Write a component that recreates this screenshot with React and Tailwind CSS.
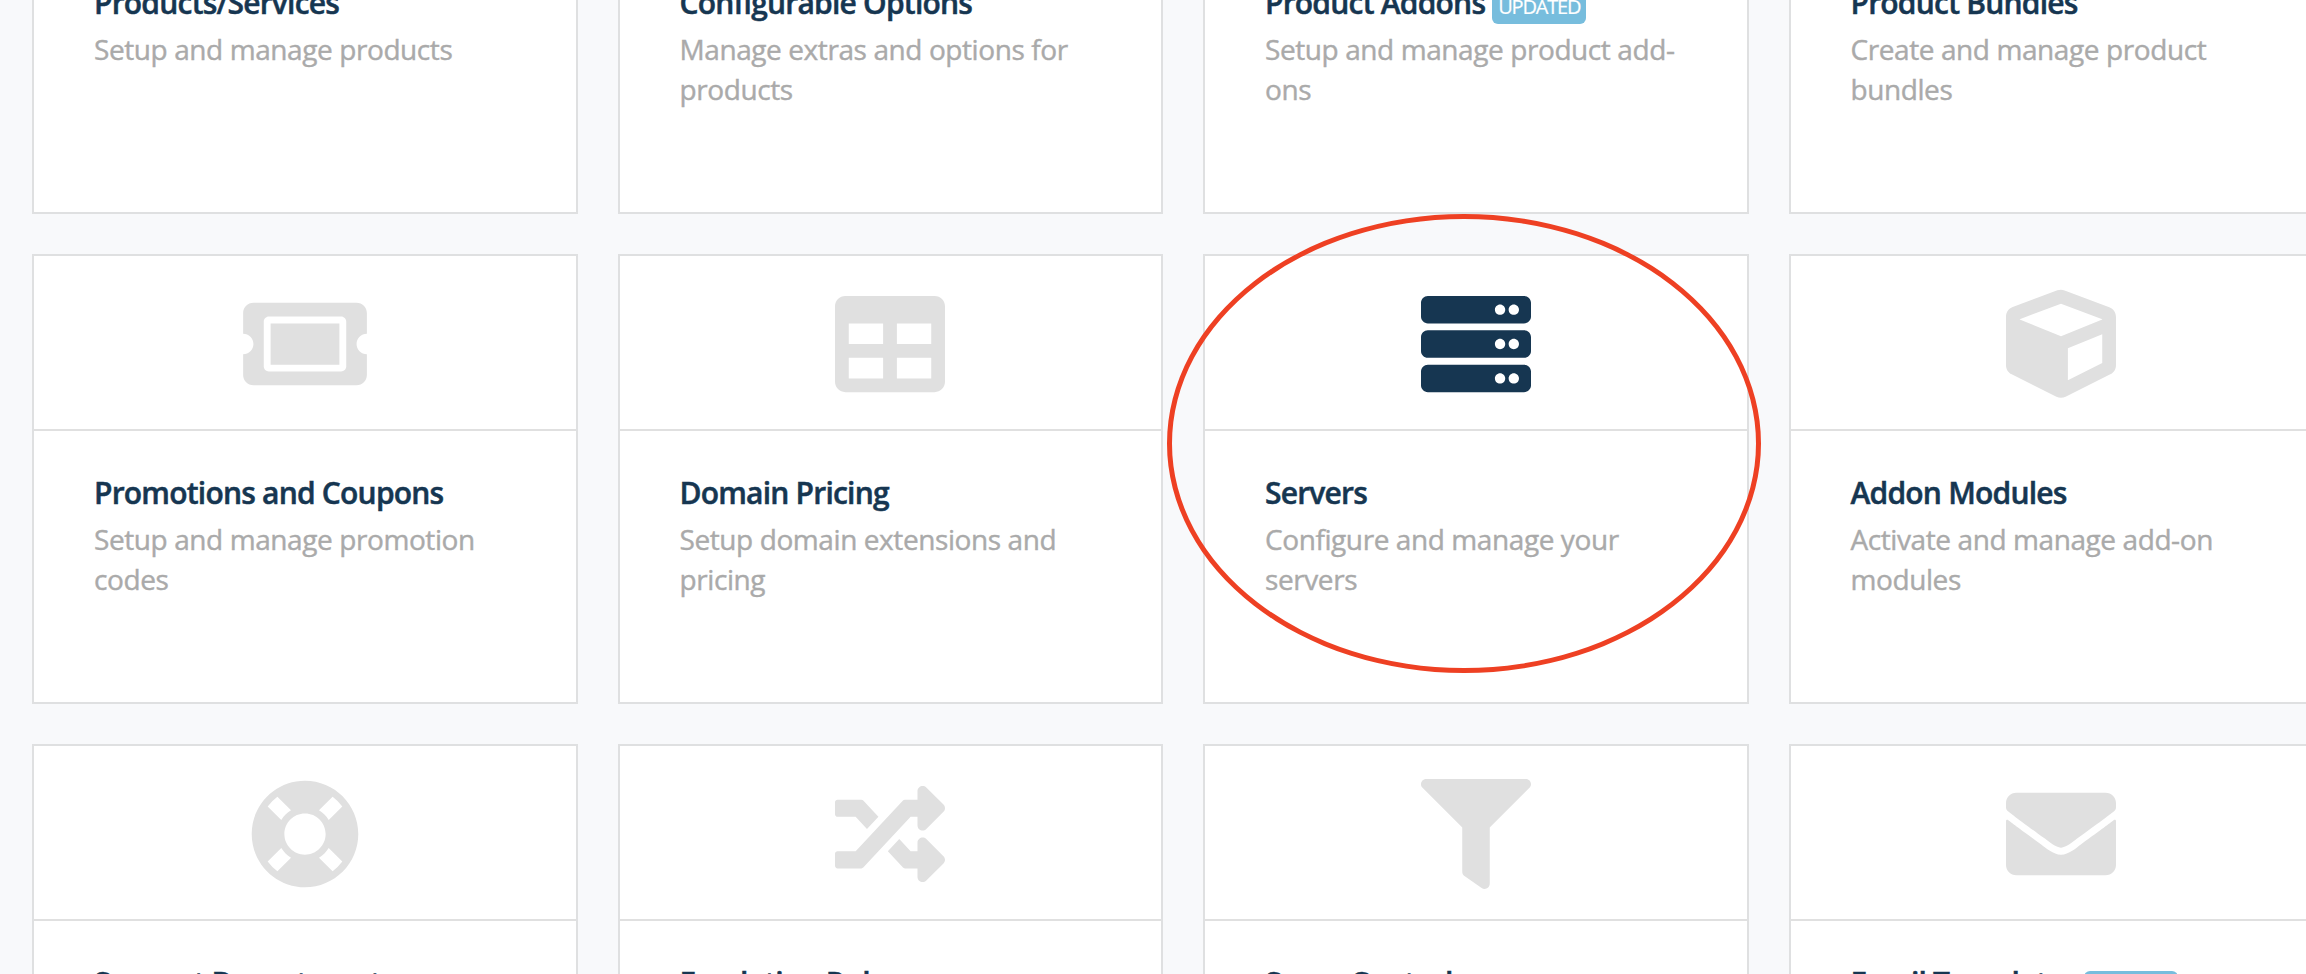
import React from 'react';
import {
  FaCube,
  FaEnvelope,
  FaFilter,
  FaLifeRing,
  FaRandom,
  FaServer,
  FaTable,
  FaTicketAlt,
} from 'react-icons/fa';

const rows = [
  [
    { title: 'Products/Services', text: 'Setup and manage products' },
    { title: 'Configurable Options', text: 'Manage extras and options for products' },
    { title: 'Product Addons', text: 'Setup and manage product add-ons', updated: true },
    { title: 'Product Bundles', text: 'Create and manage product bundles' },
  ],
  [
    { title: 'Promotions and Coupons', text: 'Setup and manage promotion codes', icon: FaTicketAlt, wide: true },
    { title: 'Domain Pricing', text: 'Setup domain extensions and pricing', icon: FaTable },
    { title: 'Servers', text: 'Configure and manage your servers', icon: FaServer, active: true },
    { title: 'Addon Modules', text: 'Activate and manage add-on modules', icon: FaCube },
  ],
  [
    { title: 'Support Departments', icon: FaLifeRing },
    { title: 'Escalation Rules', icon: FaRandom },
    { title: 'Spam Control', icon: FaFilter },
    { title: 'Email Templates', icon: FaEnvelope, updated: true },
  ],
];

function Card({ title, text, icon: Icon, wide, active, updated }) {
  return (
    <article className="h-[450px] border-2 border-[#dfe0e1] bg-white">
      <div
        className={`flex h-[175px] items-center justify-center border-b-2 border-[#e0e0e0] pt-[2px] pr-px ${
          active ? 'text-[#163651]' : 'text-[#e0e0e0]'
        }`}
      >
        {Icon && <Icon className={wide ? 'h-[110px] w-[124px]' : 'h-[110px] w-[110px]'} />}
      </div>
      <div className="px-[59.6px] pt-10">
        <h3 className="mb-[5px] h-[43px] whitespace-nowrap text-[30px] font-semibold leading-[43px] tracking-[-0.78px] text-[#163651] [-webkit-text-stroke:0.5px_#163651]">
          {title}
          {updated && (
            <>
              {' '}
              <span className="rounded-[6px] bg-[#77bddd] px-[6px] pb-[4px] pt-[1.6px] text-[20px] font-normal leading-none tracking-[-1.2px] text-white [-webkit-text-stroke:0.2px_#ffffff]">
                UPDATED
              </span>
            </>
          )}
        </h3>
        <p className="text-[28px] leading-10 tracking-[-0.41px] text-[#aaaaaa] [-webkit-text-stroke:0.4px_#aaaaaa]">{text}</p>
      </div>
    </article>
  );
}

export default function App() {
  return (
    <main className="relative h-[974px] w-full overflow-hidden bg-[#f8f9fb] font-['Open_Sans',sans-serif]">
      <div className="-mt-[236px] grid grid-cols-[repeat(4,545.5px)] gap-10 pl-[32.4px]">
        {rows.flat().map((card) => (
          <Card key={card.title} {...card} />
        ))}
      </div>
      <div className="pointer-events-none absolute left-[1167px] top-[213.5px] h-[459px] w-[593.5px] rounded-[50%] border-[5px] border-[#ee4023]" />
    </main>
  );
}
